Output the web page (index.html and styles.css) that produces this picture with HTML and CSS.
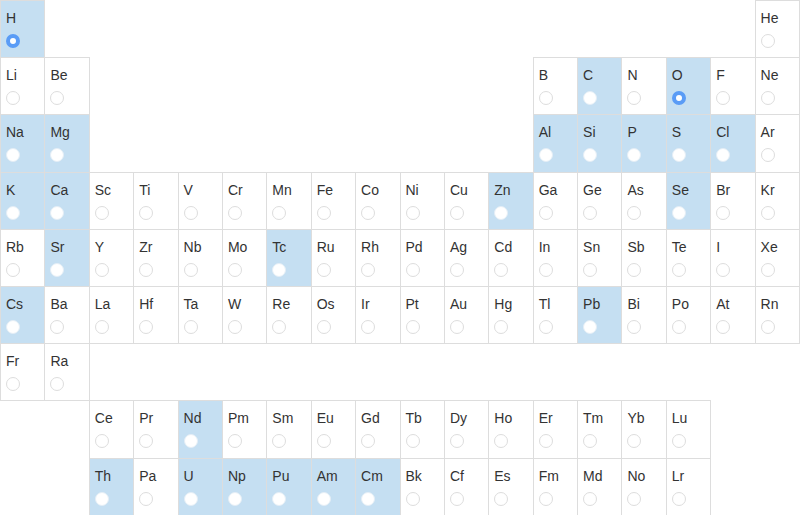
FILE: index.html
```html
<!DOCTYPE html>
<html lang="en">
<head>
  <meta charset="UTF-8" />
  <meta name="viewport" content="width=device-width, initial-scale=1">
  <title>Periodic table picker</title>
  <link rel="stylesheet" href="styles.css">
</head>
<body>

  <div class="table main">
    <label class="cell hl"><span>H</span><input type="radio" name="H" checked></label>
    <label class="cell col18"><span>He</span><input type="radio" name="He"></label>

    <label class="cell"><span>Li</span><input type="radio" name="Li"></label>
    <label class="cell"><span>Be</span><input type="radio" name="Be"></label>
    <label class="cell col13"><span>B</span><input type="radio" name="B"></label>
    <label class="cell hl"><span>C</span><input type="radio" name="C"></label>
    <label class="cell"><span>N</span><input type="radio" name="N"></label>
    <label class="cell hl"><span>O</span><input type="radio" name="O" checked></label>
    <label class="cell"><span>F</span><input type="radio" name="F"></label>
    <label class="cell"><span>Ne</span><input type="radio" name="Ne"></label>

    <label class="cell hl"><span>Na</span><input type="radio" name="Na"></label>
    <label class="cell hl"><span>Mg</span><input type="radio" name="Mg"></label>
    <label class="cell hl col13"><span>Al</span><input type="radio" name="Al"></label>
    <label class="cell hl"><span>Si</span><input type="radio" name="Si"></label>
    <label class="cell hl"><span>P</span><input type="radio" name="P"></label>
    <label class="cell hl"><span>S</span><input type="radio" name="S"></label>
    <label class="cell hl"><span>Cl</span><input type="radio" name="Cl"></label>
    <label class="cell"><span>Ar</span><input type="radio" name="Ar"></label>

    <label class="cell hl"><span>K</span><input type="radio" name="K"></label>
    <label class="cell hl"><span>Ca</span><input type="radio" name="Ca"></label>
    <label class="cell"><span>Sc</span><input type="radio" name="Sc"></label>
    <label class="cell"><span>Ti</span><input type="radio" name="Ti"></label>
    <label class="cell"><span>V</span><input type="radio" name="V"></label>
    <label class="cell"><span>Cr</span><input type="radio" name="Cr"></label>
    <label class="cell"><span>Mn</span><input type="radio" name="Mn"></label>
    <label class="cell"><span>Fe</span><input type="radio" name="Fe"></label>
    <label class="cell"><span>Co</span><input type="radio" name="Co"></label>
    <label class="cell"><span>Ni</span><input type="radio" name="Ni"></label>
    <label class="cell"><span>Cu</span><input type="radio" name="Cu"></label>
    <label class="cell hl"><span>Zn</span><input type="radio" name="Zn"></label>
    <label class="cell"><span>Ga</span><input type="radio" name="Ga"></label>
    <label class="cell"><span>Ge</span><input type="radio" name="Ge"></label>
    <label class="cell"><span>As</span><input type="radio" name="As"></label>
    <label class="cell hl"><span>Se</span><input type="radio" name="Se"></label>
    <label class="cell"><span>Br</span><input type="radio" name="Br"></label>
    <label class="cell"><span>Kr</span><input type="radio" name="Kr"></label>

    <label class="cell"><span>Rb</span><input type="radio" name="Rb"></label>
    <label class="cell hl"><span>Sr</span><input type="radio" name="Sr"></label>
    <label class="cell"><span>Y</span><input type="radio" name="Y"></label>
    <label class="cell"><span>Zr</span><input type="radio" name="Zr"></label>
    <label class="cell"><span>Nb</span><input type="radio" name="Nb"></label>
    <label class="cell"><span>Mo</span><input type="radio" name="Mo"></label>
    <label class="cell hl"><span>Tc</span><input type="radio" name="Tc"></label>
    <label class="cell"><span>Ru</span><input type="radio" name="Ru"></label>
    <label class="cell"><span>Rh</span><input type="radio" name="Rh"></label>
    <label class="cell"><span>Pd</span><input type="radio" name="Pd"></label>
    <label class="cell"><span>Ag</span><input type="radio" name="Ag"></label>
    <label class="cell"><span>Cd</span><input type="radio" name="Cd"></label>
    <label class="cell"><span>In</span><input type="radio" name="In"></label>
    <label class="cell"><span>Sn</span><input type="radio" name="Sn"></label>
    <label class="cell"><span>Sb</span><input type="radio" name="Sb"></label>
    <label class="cell"><span>Te</span><input type="radio" name="Te"></label>
    <label class="cell"><span>I</span><input type="radio" name="I"></label>
    <label class="cell"><span>Xe</span><input type="radio" name="Xe"></label>

    <label class="cell hl"><span>Cs</span><input type="radio" name="Cs"></label>
    <label class="cell"><span>Ba</span><input type="radio" name="Ba"></label>
    <label class="cell"><span>La</span><input type="radio" name="La"></label>
    <label class="cell"><span>Hf</span><input type="radio" name="Hf"></label>
    <label class="cell"><span>Ta</span><input type="radio" name="Ta"></label>
    <label class="cell"><span>W</span><input type="radio" name="W"></label>
    <label class="cell"><span>Re</span><input type="radio" name="Re"></label>
    <label class="cell"><span>Os</span><input type="radio" name="Os"></label>
    <label class="cell"><span>Ir</span><input type="radio" name="Ir"></label>
    <label class="cell"><span>Pt</span><input type="radio" name="Pt"></label>
    <label class="cell"><span>Au</span><input type="radio" name="Au"></label>
    <label class="cell"><span>Hg</span><input type="radio" name="Hg"></label>
    <label class="cell"><span>Tl</span><input type="radio" name="Tl"></label>
    <label class="cell hl"><span>Pb</span><input type="radio" name="Pb"></label>
    <label class="cell"><span>Bi</span><input type="radio" name="Bi"></label>
    <label class="cell"><span>Po</span><input type="radio" name="Po"></label>
    <label class="cell"><span>At</span><input type="radio" name="At"></label>
    <label class="cell"><span>Rn</span><input type="radio" name="Rn"></label>

    <label class="cell"><span>Fr</span><input type="radio" name="Fr"></label>
    <label class="cell"><span>Ra</span><input type="radio" name="Ra"></label>
  </div>

  <div class="table fblock">
    <label class="cell col3"><span>Ce</span><input type="radio" name="Ce"></label>
    <label class="cell"><span>Pr</span><input type="radio" name="Pr"></label>
    <label class="cell hl"><span>Nd</span><input type="radio" name="Nd"></label>
    <label class="cell"><span>Pm</span><input type="radio" name="Pm"></label>
    <label class="cell"><span>Sm</span><input type="radio" name="Sm"></label>
    <label class="cell"><span>Eu</span><input type="radio" name="Eu"></label>
    <label class="cell"><span>Gd</span><input type="radio" name="Gd"></label>
    <label class="cell"><span>Tb</span><input type="radio" name="Tb"></label>
    <label class="cell"><span>Dy</span><input type="radio" name="Dy"></label>
    <label class="cell"><span>Ho</span><input type="radio" name="Ho"></label>
    <label class="cell"><span>Er</span><input type="radio" name="Er"></label>
    <label class="cell"><span>Tm</span><input type="radio" name="Tm"></label>
    <label class="cell"><span>Yb</span><input type="radio" name="Yb"></label>
    <label class="cell"><span>Lu</span><input type="radio" name="Lu"></label>

    <label class="cell hl col3"><span>Th</span><input type="radio" name="Th"></label>
    <label class="cell"><span>Pa</span><input type="radio" name="Pa"></label>
    <label class="cell hl"><span>U</span><input type="radio" name="U"></label>
    <label class="cell hl"><span>Np</span><input type="radio" name="Np"></label>
    <label class="cell hl"><span>Pu</span><input type="radio" name="Pu"></label>
    <label class="cell hl"><span>Am</span><input type="radio" name="Am"></label>
    <label class="cell hl"><span>Cm</span><input type="radio" name="Cm"></label>
    <label class="cell"><span>Bk</span><input type="radio" name="Bk"></label>
    <label class="cell"><span>Cf</span><input type="radio" name="Cf"></label>
    <label class="cell"><span>Es</span><input type="radio" name="Es"></label>
    <label class="cell"><span>Fm</span><input type="radio" name="Fm"></label>
    <label class="cell"><span>Md</span><input type="radio" name="Md"></label>
    <label class="cell"><span>No</span><input type="radio" name="No"></label>
    <label class="cell"><span>Lr</span><input type="radio" name="Lr"></label>
  </div>

</body>
</html>
```

FILE: styles.css
```css
html, body {
  margin: 0;
  padding: 0;
  overflow: hidden;
  background: #fff;
  font-family: "Liberation Sans", Arial, sans-serif;
  color: #333;
}

.table {
  display: grid;
  width: 799px;
  grid-template-columns: repeat(18, 1fr);
}

.main {
  grid-template-rows: repeat(7, 57.2px);
}

.fblock {
  grid-template-rows: repeat(2, 57.2px);
}

.cell {
  display: flex;
  flex-direction: column;
  align-items: flex-start;
  margin: 0 -1px -1px 0;
  padding: 7px 5px 0;
  border: 1px solid #ddd;
  background: #fff;
  font-size: 14px;
  line-height: 20px;
  cursor: pointer;
}

.cell.hl {
  background: #c5dff2;
}

.col3 { grid-column-start: 3; }
.col13 { grid-column-start: 13; }
.col18 { grid-column-start: 18; }

.cell input {
  appearance: none;
  -webkit-appearance: none;
  box-sizing: border-box;
  width: 14px;
  height: 14px;
  margin: 6px 0 0;
  border: 1px solid #ddd;
  border-radius: 50%;
  background: #fff;
  cursor: pointer;
}

.cell.hl input {
  border-color: #e4eef6;
}

.cell input:checked {
  border: 4px solid #5a9cf6;
}
```
